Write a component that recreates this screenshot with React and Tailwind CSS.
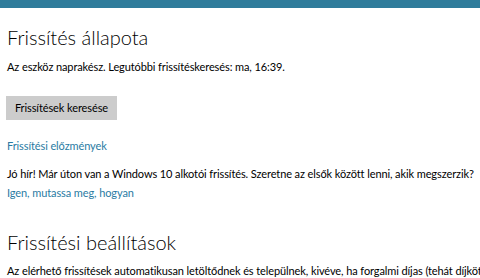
export default function App() {
  return (
    <div className="w-[480px] h-[278px] overflow-hidden bg-white font-['Lato',sans-serif] text-black">
      <div className="h-2 bg-[#2f7c9b]" />
      <div className="pl-[7px] text-[11px] leading-[16px] tracking-[-0.1px]">
        <h1 className="mt-[15px] text-[20px] leading-[28px] font-light tracking-normal">Frissítés állapota</h1>
        <p className="mt-[8px] whitespace-nowrap">
          Az eszköz naprakész. Legutóbbi frissítéskeresés: ma, 16:39.
        </p>
        <button className="mt-[21px] -ml-px h-[24px] w-[111px] bg-[#cccccc] whitespace-nowrap">
          Frissítések keresése
        </button>
        <div className="mt-[18px] text-[#2a7ba3]">Frissítési előzmények</div>
        <p className="mt-[12px] whitespace-nowrap">
          Jó hír! Már úton van a Windows 10 alkotói frissítés. Szeretne az elsők között lenni, akik megszerzik?
        </p>
        <div className="mt-[3px] text-[#2a7ba3]">Igen, mutassa meg, hogyan</div>
        <h2 className="mt-[27px] text-[20px] leading-[28px] font-light tracking-normal">Frissítési beállítások</h2>
        <p className="mt-[7px] whitespace-nowrap">
          Az elérhető frissítések automatikusan letöltődnek és települnek, kivéve, ha forgalmi díjas (tehát díjköteles) kapcsolatot használ.
        </p>
      </div>
    </div>
  )
}
